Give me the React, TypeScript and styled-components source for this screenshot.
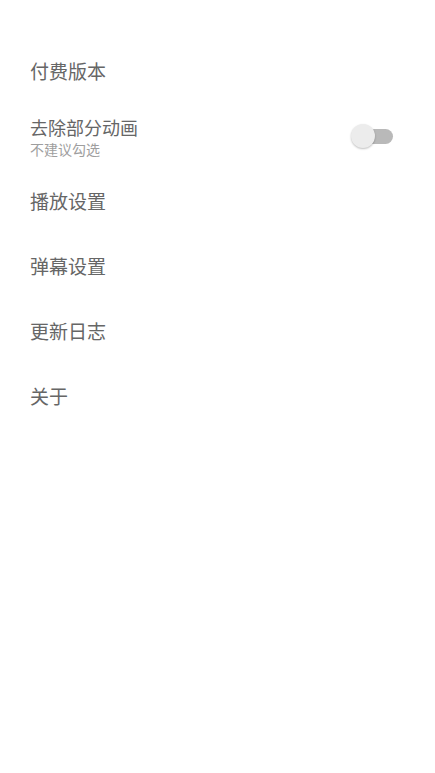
import React, { useState } from "react";
import styled, { createGlobalStyle } from "styled-components";

const GlobalStyle = createGlobalStyle`
  html, body {
    margin: 0;
    padding: 0;
    background: #ffffff;
  }

  body {
    font-family: "Noto Sans CJK SC", "Noto Sans", sans-serif;
  }
`;

const Page = styled.div`
  width: 435px;
  min-height: 773px;
  padding-top: 38px;
  box-sizing: border-box;
  background: #ffffff;
`;

const Row = styled.div`
  height: 65px;
  padding-left: 30px;
  padding-right: 42px;

  display: flex;
  align-items: center;
  justify-content: space-between;
`;

const Texts = styled.div`
  display: flex;
  flex-direction: column;
  padding-top: 2px;
`;

const Title = styled.div<{ $small?: boolean }>`
  font-size: ${(p) => (p.$small ? "18px" : "19px")};
  line-height: 24px;
  color: #666666;
`;

const Subtitle = styled.div`
  margin-top: 1px;
  font-size: 14px;
  line-height: 18px;
  color: #9e9e9e;
`;

const Switch = styled.button<{ $on: boolean }>`
  position: relative;
  width: 42px;
  height: 24px;
  padding: 0;
  border: none;
  background: transparent;
  cursor: pointer;

  &::before {
    content: "";
    position: absolute;
    left: 6px;
    right: 0;
    top: 5px;
    height: 15px;
    border-radius: 8px;
    background: ${(p) => (p.$on ? "#f5a8c2" : "#b9b9b9")};
  }

  &::after {
    content: "";
    position: absolute;
    top: 0;
    left: ${(p) => (p.$on ? "18px" : "0")};
    width: 24px;
    height: 24px;
    border-radius: 50%;
    background: ${(p) => (p.$on ? "#fb7299" : "#ececec")};
    box-shadow: 0 1px 2px rgba(0, 0, 0, 0.25);
  }
`;

const items = ["播放设置", "弹幕设置", "更新日志", "关于"];

function App() {
  const [reduceAnim, setReduceAnim] = useState(false);

  return (
    <Page>
      <GlobalStyle />

      <Row>
        <Title>付费版本</Title>
      </Row>

      <Row>
        <Texts>
          <Title $small>去除部分动画</Title>
          <Subtitle>不建议勾选</Subtitle>
        </Texts>
        <Switch $on={reduceAnim} onClick={() => setReduceAnim(!reduceAnim)} />
      </Row>

      {items.map((item) => (
        <Row key={item}>
          <Title>{item}</Title>
        </Row>
      ))}
    </Page>
  );
}

export default App;
